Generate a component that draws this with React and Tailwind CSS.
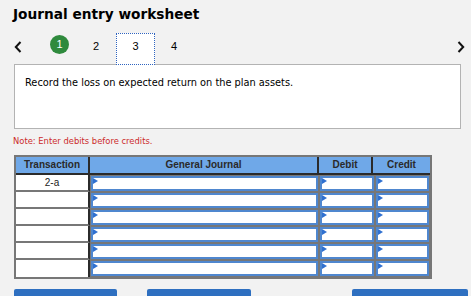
import React from "react";

const V = { fontFamily: '"DejaVu Sans", Verdana, sans-serif' };
const A = { fontFamily: '"Liberation Sans", Arial, sans-serif' };

function InputCell({ w }) {
  return (
    <div className={`${w} h-full border border-[#777] bg-[#777]`}>
      <div className="relative h-full border-2 border-[#4f87cf] bg-white">
        <div className="absolute left-0 top-0 h-0 w-0 border-y-[3px] border-l-[5px] border-y-transparent border-l-[#2f70d0]" />
      </div>
    </div>
  );
}

export default function App() {
  const rows = ["2-a", "", "", "", "", ""];
  return (
    <div className="h-[296px] w-[471px] overflow-hidden bg-[#f2f2f2] text-black" style={V}>
      <div className="pl-[13px] pt-[5px] text-[13.7px] font-bold leading-[18px]">Journal entry worksheet</div>
      <div className="relative mt-[10px] h-[31px]">
        <svg className="absolute left-[14px] top-[8px]" width="8" height="12" viewBox="0 0 8 12">
          <path d="M6.5 1 L1.8 6 L6.5 11" fill="none" stroke="#111" strokeWidth="2" />
        </svg>
        <div className="absolute left-[50px] top-[2px] flex h-[19px] w-[19px] items-center justify-center rounded-full bg-[#2f8a3d] text-[11px] text-white" style={A}>1</div>
        <div className="absolute left-[93px] top-[5px] text-[11px]" style={A}>2</div>
        <div className="absolute left-[116px] top-0 flex h-[32px] w-[39px] justify-center border border-dotted border-[#2f64c0] bg-white pt-[4px] text-[11px]" style={A}>3</div>
        <div className="absolute left-[171px] top-[5px] text-[11px]" style={A}>4</div>
        <svg className="absolute left-[457px] top-[8px]" width="8" height="12" viewBox="0 0 8 12">
          <path d="M1.5 1 L6.2 6 L1.5 11" fill="none" stroke="#111" strokeWidth="2" />
        </svg>
      </div>
      <div className="ml-[14px] h-[65px] w-[447px] border border-[#b3b3b3] bg-white pl-[10px] pt-[11px] text-[9.8px]">
        Record the loss on expected return on the plan assets.
      </div>
      <div className="ml-[13px] mt-[7px] text-[8.4px] leading-[11px] text-[#cc2b2b]">Note: Enter debits before credits.</div>
      <div className="ml-[14px] mt-[8px] w-[418px] border-2 border-[#777]" style={A}>
        <div className="flex h-[18px] border-b-2 border-[#2b2b2b] bg-[#6fa8e8] text-[10px] font-bold leading-[16px] text-[#2a2a2a]">
          <div className="w-[74px] border-r-2 border-[#2b2b2b] text-center">Transaction</div>
          <div className="w-[229px] border-r-2 border-[#2b2b2b] text-center">General Journal</div>
          <div className="w-[54px] border-r-2 border-[#2b2b2b] text-center">Debit</div>
          <div className="flex-1 text-center">Credit</div>
        </div>
        {rows.map((r, i) => (
          <div key={i} className="flex h-[17px]">
            <div className={`w-[74px] border-r-2 border-[#2b2b2b] bg-white text-center text-[10px] leading-[15px] text-[#222] ${i < 5 ? "border-b-2 border-b-[#777]" : ""}`}>{r}</div>
            <InputCell w="w-[229px]" />
            <InputCell w="w-[56px]" />
            <InputCell w="flex-1" />
          </div>
        ))}
      </div>
      <div className="mt-[10px] flex">
        <div className="ml-[14px] h-[10px] w-[103px] rounded-t-[2px] bg-[#2e6fc0]" />
        <div className="ml-[30px] h-[10px] w-[104px] rounded-t-[2px] bg-[#2e6fc0]" />
        <div className="ml-[101px] h-[10px] w-[116px] rounded-t-[2px] bg-[#2e6fc0]" />
      </div>
    </div>
  );
}
